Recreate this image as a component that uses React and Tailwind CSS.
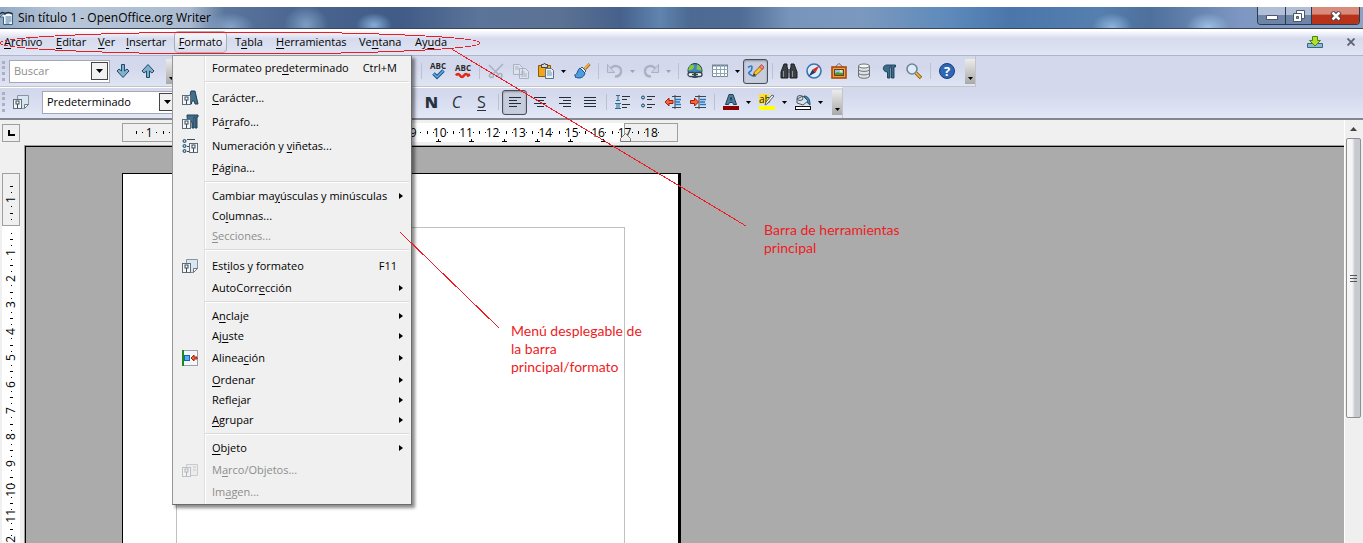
/* eslint-disable react/prop-types */
import { useState } from "react";

const menus = [
  { label: "Archivo", key: 0, width: "w-[52px]" },
  { label: "Editar", key: 0, width: "w-[42px]" },
  { label: "Ver", key: 0, width: "w-[28px]" },
  { label: "Insertar", key: 0, width: "w-[52px]" },
  { label: "Formato", key: 0, width: "mr-1 w-[53px]", open: true },
  { label: "Tabla", key: 1, width: "w-[41px]" },
  { label: "Herramientas", key: 0, width: "w-[83px]" },
  { label: "Ventana", key: 2, width: "w-[56px]" },
  { label: "Ayuda", key: 2, width: "w-[48px]" },
];

const formatMenu = [
  [{ label: "Formateo predeterminado", key: 12, shortcut: "Ctrl+M" }],
  [
    { label: "Carácter...", key: 0, icon: "character" },
    { label: "Párrafo...", key: 2, icon: "paragraph" },
    { label: "Numeración y viñetas...", key: 13, icon: "bullets" },
    { label: "Página...", key: 0 },
  ],
  [
    { label: "Cambiar mayúsculas y minúsculas", key: 10, sub: true },
    { label: "Columnas...", key: 2 },
    { label: "Secciones...", key: 0, disabled: true },
  ],
  [
    { label: "Estilos y formateo", key: 3, icon: "styles", shortcut: "F11" },
    { label: "AutoCorrección", key: 8, sub: true },
  ],
  [
    { label: "Anclaje", key: 1, sub: true },
    { label: "Ajuste", key: 2, sub: true },
    { label: "Alineación", key: 6, icon: "alignment", sub: true },
    { label: "Ordenar", key: 0, sub: true },
    { label: "Reflejar", key: 5, sub: true },
    { label: "Agrupar", key: 0, sub: true },
  ],
  [
    { label: "Objeto", key: 0, sub: true },
    { label: "Marco/Objetos...", key: 1, icon: "frame", disabled: true },
    { label: "Imagen...", key: 2, disabled: true },
  ],
];

const tag = (x, y) => (
  <g>
    <rect x={x + 0.5} y={y + 0.5} width="8" height="9" fill="#f4f6f8" stroke="#5f6c79" />
    <rect x={x + 3} y={y + 2} width="3" height="3" fill="#fff" stroke="#3b4a58" />
    <path d={`M${x + 4.5} ${y + 5}v4`} stroke="#3b4a58" />
  </g>
);

const lines = (color, rows) =>
  rows.map(([x, y, w]) => <rect key={y} x={x} y={y} width={w} height="1" fill={color} />);

const bullets = (
  <g fill="#9fd0e8" stroke="#1d4560">
    <circle cx="2.5" cy="3" r="1.5" />
    <circle cx="2.5" cy="8" r="1.5" />
    <circle cx="2.5" cy="13" r="1.5" />
  </g>
);

const icons = {
  character: (
    <>
      <path d="M6 14 9 1h4l3 13h-3l-.7-3H10l-.6 3z" fill="#41708f" stroke="#1f3f57" strokeWidth="1" />
      {tag(0, 5)}
    </>
  ),
  paragraph: (
    <>
      <path d="M5 1h11v2h-1v11h-2V3h-1v11h-2V8C6 8 5 6 5 1z" fill="#41708f" stroke="#1f3f57" strokeWidth="1" />
      {tag(0, 5)}
    </>
  ),
  bullets: (
    <>
      {bullets}
      <path d="M5 1.500h8M5 8.500h2M5 13.500h2" stroke="#3b4a58" />
      {tag(7, 5)}
    </>
  ),
  styles: (
    <>
      <path d="M4.500 1.500h11v9l-4 4h-7z" fill="#d9e6ef" stroke="#8894a0" />
      <path d="M15.500 10.500h-4v4z" fill="#fff" stroke="#6d7a86" />
      {tag(0, 5)}
    </>
  ),
  frame: (
    <g opacity=".35">
      <path d="M4.500 2.500h11v11h-11z" fill="#e5e5e5" stroke="#888" />
      <path d="M11 5h3M11 8h3" stroke="#888" />
      {tag(0, 5)}
    </g>
  ),
  alignment: (
    <>
      <rect x=".5" y=".5" width="15" height="15" fill="#f4f6f9" stroke="#9aa3ad" />
      <path d="M1 0v16" stroke="#1e8a1e" strokeWidth="2" />
      <rect x="2.500" y="5.500" width="5" height="5" fill="#52b0f2" stroke="#1667a8" />
      <path d="M9 8l3-3v2h3v2h-3v2z" fill="#f2683c" stroke="#a51f0c" />
    </>
  ),
  down: <path d="M6.500 1.500h3V8l2.500-2 2 2-6 6.500L2 8l2-2 2.500 2z" fill="#7fb0cc" stroke="#1f4a6b" />,
  up: <path d="M6.500 14.500h3V8l2.500 2 2-2-6-6.500L2 8l2 2 2.500-2z" fill="#7fb0cc" stroke="#1f4a6b" />,
  spell: (
    <>
      <text x="8" y="6" textAnchor="middle" fontSize="8" fontWeight="700" fill="#2b2b2b">ABC</text>
      <path d="M3.500 10.500 7 14 13.500 7.500" fill="none" stroke="#174f87" strokeWidth="3.500" />
      <path d="M3.500 10.500 7 14 13.500 7.500" fill="none" stroke="#63b1ee" strokeWidth="1.500" />
    </>
  ),
  autospell: (
    <>
      <text x="8" y="8" textAnchor="middle" fontSize="8" fontWeight="700" fill="#2b2b2b">ABC</text>
      <path d="M1 12.500q2-3 4 0t4 0t4 0l2-1" fill="none" stroke="#e02a16" strokeWidth="2.600" />
    </>
  ),
  cut: (
    <g fill="none" stroke="#aab1c2" strokeWidth="1.600">
      <path d="M1 2l9 9M15 1 5 11" />
      <circle cx="3.500" cy="12.500" r="2" />
      <circle cx="12" cy="12.500" r="2" />
    </g>
  ),
  copy: (
    <g fill="#dfe3ee" stroke="#aab1c2">
      <path d="M.5 1.500h6l3 3v7h-9zM6.500 5.500h6l3 3v7h-9z" />
      <path d="M2 4h4M2 6h4M8 9h4M8 11h6M8 13h6" />
    </g>
  ),
  paste: (
    <>
      <path d="M.5 2.500h12v11H.5z" fill="#f0a51c" stroke="#8d5a08" />
      <path d="M3.500 4.500v-3h2L6.500 0l1 1.500h2v3z" fill="#d8d8d8" stroke="#444" />
      <path d="M7.500 5.500h6l2 2v8h-8z" fill="#e9f1f7" stroke="#5b7185" />
      <path d="M9 8h4M9 10h5M9 12h5" stroke="#6d97b8" />
    </>
  ),
  brush: (
    <>
      <path d="M15.500 1 11 6" stroke="#b46b0f" strokeWidth="3" />
      <path d="M15 1 11 5.500" stroke="#f7b84b" strokeWidth="1.500" />
      <path d="M8 4l4 4-1.500 1.500-4-4z" fill="#e8eef4" stroke="#3b5a78" />
      <path d="M6 5l5 5c-1 5-6 6-10 4 1-1 0-1.500-.5-2 3 0 3-5.500 5.500-7z" fill="#4f9be0" stroke="#174f87" />
    </>
  ),
  undo: (
    <>
      <path d="M3 7C5 1 15 2 14 9c-.5 3-3 4.500-6 4.500" fill="none" stroke="#aab1c2" strokeWidth="2.400" />
      <path d="M.5 1.500v8h7z" fill="#cdd2de" stroke="#aab1c2" />
    </>
  ),
  redo: (
    <>
      <path d="M13 7C11 1 1 2 2 9c.5 3 3 4.500 6 4.500" fill="none" stroke="#aab1c2" strokeWidth="2.400" />
      <path d="M15.500 1.500v8h-7z" fill="#cdd2de" stroke="#aab1c2" />
    </>
  ),
  link: (
    <>
      <circle cx="8" cy="7.500" r="7" fill="#3f86c4" stroke="#16405f" />
      <path d="M3 2.500c3-2 5 0 4 2s-3 3-5.500 3C1 6 2 3.500 3 2.500zM10 1.500c3 1 5 4 4.500 6l-5-1z" fill="#8cc63a" />
      <rect x="1" y="9.500" width="7" height="4" rx="2" fill="#fff" stroke="#35434c" strokeWidth="1.300" />
      <rect x="8" y="9.500" width="7" height="4" rx="2" fill="#fff" stroke="#35434c" strokeWidth="1.300" />
      <path d="M5 11.500h6" stroke="#35434c" strokeWidth="1.300" />
    </>
  ),
  table: (
    <>
      <path d="M.5 2.500h15v11H.5z" fill="#fff" stroke="#6f8796" />
      <path d="M0 2.500h16" stroke="#6f8796" strokeWidth="2" />
      <path d="M0 6.500h16M0 10.500h16M4.500 2v12M8.500 2v12M12.500 2v12" stroke="#8fa6b5" />
    </>
  ),
  draw: (
    <>
      <path d="M0 4.500q4-3 4 0t-2.500 4.500 3.500 4h3" fill="none" stroke="#2b78d4" strokeWidth="1.600" />
      <path d="M5 13l1.500-4L13 2.500 15.500 5 9 11.500z" fill="#f7c62e" stroke="#9a6508" />
      <path d="M11.500 4 13.500 1.500 16 4 14 6.500z" fill="#f08b8b" stroke="#b03838" strokeWidth=".8" />
      <path d="M5 13l1-2.500L7.500 12z" fill="#222" />
    </>
  ),
  find: (
    <>
      <path d="M3 1h3v3l1 3v8H0V9zM13 1h-3v3L9 7v8h7V9z" fill="#3b4046" stroke="#1c1f22" />
      <path d="M7 6h2v4H7z" fill="#5d646b" />
      <path d="M2.500 8v6M11.500 8v6" stroke="#8b939b" />
    </>
  ),
  navigator: (
    <>
      <circle cx="8" cy="8" r="7" fill="#dcebf8" stroke="#3a74b0" strokeWidth="1.600" />
      <path d="M13.500 2.500 9.500 9.500 6.500 6.500z" fill="#e32814" />
      <path d="M2.500 13.500l4-7 3 3z" fill="#1b3c78" />
    </>
  ),
  gallery: (
    <>
      <path d="M4 4l4-3.500L12 4" fill="none" stroke="#8a6a4a" />
      <rect x="1" y="4" width="14" height="11" fill="#f0a048" stroke="#a8480c" strokeWidth="1.600" />
      <rect x="3.500" y="6.500" width="9" height="6" fill="#8cc8f0" stroke="#7a3b0e" />
      <path d="M4 12v-2l3-1 2 1h3v2z" fill="#4c9a2a" />
      <circle cx="10" cy="8" r="1" fill="#fff29a" />
    </>
  ),
  source: (
    <>
      <path d="M2.500 3v10c0 3 11 3 11 0V3" fill="#dfe2e5" stroke="#6c7378" />
      <ellipse cx="8" cy="3" rx="5.500" ry="2" fill="#f8f8f8" stroke="#6c7378" />
      <path d="M2.500 6.500c0 2.500 11 2.500 11 0M2.500 10c0 2.500 11 2.500 11 0" fill="none" stroke="#6c7378" />
    </>
  ),
  pilcrow: <path d="M6 2h8.500v2H13v11h-2.500V4H9v11H6.500V9C1 9 1 2 6 2z" fill="#3c6c8c" stroke="#173c55" strokeWidth=".9" />,
  zoom: (
    <>
      <path d="M10 10l5 5" stroke="#8d5a08" strokeWidth="3.400" />
      <path d="M10 10l4.500 4.500" stroke="#f5bf50" strokeWidth="1.600" />
      <circle cx="6" cy="6" r="5" fill="#dcecf8" stroke="#718596" strokeWidth="1.600" />
    </>
  ),
  help: (
    <>
      <circle cx="8" cy="8" r="7.500" fill="#2f66b4" stroke="#173f7c" />
      <text x="8" y="12.500" textAnchor="middle" fontSize="13" fontWeight="700" fill="#fff">?</text>
    </>
  ),
  alignLeft: <>{lines("#1f2d38", [[2, 3, 12], [2, 6, 8], [2, 9, 12], [2, 12, 8]])}</>,
  alignCenter: <>{lines("#1f2d38", [[2, 3, 12], [4, 6, 8], [2, 9, 12], [5, 12, 7]])}</>,
  alignRight: <>{lines("#1f2d38", [[2, 3, 12], [6, 6, 8], [2, 9, 12], [6, 12, 8]])}</>,
  justify: <>{lines("#1f2d38", [[2, 3, 12], [2, 6, 12], [2, 9, 12], [2, 12, 12]])}</>,
  numbered: (
    <>
      <path d="M1 1.500h4M3 2v4M1 6.500h4M0 9.500h6M2 10v4M4 10v4M0 14.500h6" stroke="#2b6f92" />
      <path d="M7 2.500h8M7 5.500h5M7 10.500h8M7 13.500h5" stroke="#2b333a" />
    </>
  ),
  bulleted: (
    <>
      <g fill="#9fd0e8" stroke="#1d4560">
        <circle cx="3" cy="3.500" r="1.500" />
        <circle cx="3" cy="11.500" r="1.500" />
      </g>
      <path d="M7 2.500h8M7 5.500h5M7 10.500h8M7 13.500h5" stroke="#2b333a" />
    </>
  ),
  outdent: (
    <>
      <path d="M7 2.500h9M7 13.500h9M10 1v14" stroke="#3b4650" />
      <path d="M10 5.500h6M10 8h5M10 10.500h6" stroke="#1f7ac4" strokeWidth="1.500" />
      <path d="M0 8l4-4v2.500h4v3H4V12z" fill="#f2683c" stroke="#a51f0c" />
    </>
  ),
  indent: (
    <>
      <path d="M5 2.500h11M5 13.500h11M9 1v14" stroke="#3b4650" />
      <path d="M10 5.500h6M10 8h5M10 10.500h6" stroke="#1f7ac4" strokeWidth="1.500" />
      <path d="M8.500 8l-4-4v2.500h-4v3h4V12z" fill="#f2683c" stroke="#a51f0c" />
    </>
  ),
  fontColor: (
    <>
      <path d="M2.500 10.500 6 .5h4l3.500 10h-3l-.8-2H6.400l-.8 2zM7 6h2l-1-3z" fill="#4d7f9e" stroke="#1f3f57" />
      <rect y="12" width="16" height="4" fill="#8b0000" />
    </>
  ),
  highlight: (
    <>
      <rect width="10" height="10" fill="#ffe12b" />
      <text x="0" y="9" fontSize="10" fill="#222">ab</text>
      <path d="M15 2 8 10l-2 1 1-3 6-7z" fill="#f1f3f5" stroke="#59636c" />
      <rect y="12" width="16" height="4" fill="#ffff00" />
    </>
  ),
  fill: (
    <>
      <path d="M9 2c4 0 6 3 6 9-2-1-3-3-3-5z" fill="#3d8fc4" stroke="#1d4b6b" />
      <path d="M2 5l6-3 5 5-5 4-6-2z" fill="#d6dfe5" stroke="#4a5a66" />
      <ellipse cx="5" cy="4" rx="3" ry="2.500" fill="none" stroke="#4a5a66" />
      <rect x=".5" y="12.500" width="15" height="3" fill="#fff" stroke="#111" />
    </>
  ),
};

const Icon = ({ name }) => (
  <svg viewBox="0 0 16 16" className="size-4 shrink-0 overflow-visible" aria-hidden="true">
    {icons[name]}
  </svg>
);

const Mnemonic = ({ label, at }) => (
  <span>
    {label.slice(0, at)}
    <span className="underline underline-offset-2">{label[at]}</span>
    {label.slice(at + 1)}
  </span>
);

const Tool = ({ name, label, active, children }) => (
  <button
    type="button"
    aria-label={label || name}
    className={
      active
        ? "flex h-[25px] w-[25px] shrink-0 items-center justify-center rounded-[3px] border border-[#4a4d58] bg-[#c8cddd] shadow-[inset_0_1px_2px_#8b8f9c]"
        : "flex h-[25px] w-[25px] shrink-0 items-center justify-center"
    }
  >
    {children || <Icon name={name} />}
  </button>
);

const Caret = ({ dim }) => (
  <button type="button" aria-label="Más opciones" className="flex h-[25px] w-[11px] shrink-0 items-center justify-center">
    <svg viewBox="0 0 5 3" className={dim ? "h-[3px] w-[5px] text-[#9da3b3]" : "h-[3px] w-[5px] text-black"}>
      <path d="M0 0h5L2.500 3z" fill="currentColor" />
    </svg>
  </button>
);

const Sep = () => (
  <div className="flex w-2 shrink-0 justify-center">
    <div className="h-4 w-px bg-[#bcc1d0]" />
  </div>
);

const Overflow = () => (
  <button
    type="button"
    aria-label="Opciones de la barra"
    className="flex h-[25px] w-[10px] shrink-0 items-end justify-center bg-linear-to-b from-[#ececec] to-[#a9a9a9] pb-1"
  >
    <svg viewBox="0 0 5 3" className="h-[3px] w-[5px]">
      <path d="M0 0h5L2.500 3z" />
    </svg>
  </button>
);

const Handle = () => <div className="mx-0.5 h-5 w-[3px] shrink-0 border-l-[3px] border-dotted border-[#aab0c2]" />;

const DropButton = ({ label }) => (
  <button type="button" aria-label={label} className="flex h-[18px] w-[17px] shrink-0 items-center justify-center border border-[#444] bg-[#f1f1f1]">
    <svg viewBox="0 0 7 4" className="h-1 w-[7px]">
      <path d="M0 0h7L3.500 4z" />
    </svg>
  </button>
);

const FormatMenu = () => (
  <div
    role="menu"
    className="absolute top-full -left-0.5 z-20 w-[240px] border border-[#979797] border-r-[#6b6b6b] border-b-[#6b6b6b] bg-[#f0f0f0] bg-[linear-gradient(to_right,transparent_31px,#dfdfdf_31px,#dfdfdf_32px,#fff_32px,#fff_33px,transparent_33px)] py-0.5 shadow-[3px_3px_3px_rgba(0,0,0,0.45)]"
  >
    {formatMenu.map((group, i) => (
      <div key={i}>
        {i > 0 && (
          <div className="flex h-2 items-center pr-0.5 pl-8">
            <div className="h-0.5 flex-1 border-t border-[#dadada] bg-white" />
          </div>
        )}
        {group.map((item) => (
          <button
            key={item.label}
            type="button"
            role="menuitem"
            disabled={item.disabled}
            className={`flex w-full items-center pr-2 text-left whitespace-nowrap ${item.icon ? "h-6" : "h-5"} ${
              item.disabled ? "text-[#8d8d8d]" : "text-black"
            }`}
          >
            <span className="flex w-[39px] shrink-0 pl-[9px]">{item.icon && <Icon name={item.icon} />}</span>
            <span className="flex-1">
              <Mnemonic label={item.label} at={item.key} />
            </span>
            {item.shortcut && <span className="pr-1.5">{item.shortcut}</span>}
            {item.sub && (
              <svg viewBox="0 0 4 6" className="h-1.5 w-1 shrink-0">
                <path d="M0 0v6l4-3z" />
              </svg>
            )}
          </button>
        ))}
      </div>
    ))}
  </div>
);

const TitleBar = () => (
  <div className="flex h-[22px] items-start justify-between border-b border-[#3c4658] bg-[radial-gradient(ellipse_24px_14px_at_230px_20px,#86a4c8,transparent),radial-gradient(ellipse_22px_20px_at_306px_18px,#7d9ec2,transparent),radial-gradient(ellipse_18px_12px_at_374px_18px,#86aed8,transparent),radial-gradient(ellipse_20px_14px_at_1112px_20px,#8fb4dc,transparent),radial-gradient(ellipse_22px_14px_at_1208px_20px,#9cc0e4,transparent),linear-gradient(to_right,#93a9c4_0px,#b9c7d9_60px,#a9bad0_190px,#5a769d_225px,#4a6690_300px,#3f5b86_400px,#5b7499_480px,#5c7294_560px,#46618b_620px,#5f84ae_660px,#4c6a92_690px,#4e6c94_740px,#7795ba_790px,#7b99be_860px,#5d8abb_950px,#4a76aa_1010px,#557fae_1100px,#4e709c_1150px,#7d97c2_1240px,#8ba2c6)] text-xs">
    <div className="flex h-[21px] items-center gap-1">
      <svg viewBox="0 0 14 14" className="size-[14px]" aria-hidden="true">
        <path d="M1.500 4.500 5 2h7.500v11.500h-9V6H0z" fill="#f5f8fb" stroke="#35607f" />
        <path d="M0 3q3-3 5 0 3-3 7 0" fill="none" stroke="#1f3345" strokeWidth="1.600" />
        <path d="M5.500 6h6M5.500 8h6M5.500 10h6M5.500 12h4" stroke="#48799b" />
      </svg>
      <span>Sin título 1 - OpenOffice.org Writer</span>
    </div>
    <div className="mr-[3px] flex h-[18px] overflow-hidden rounded-b border border-t-0 border-[#2c3a50]">
      <button type="button" aria-label="Minimizar" className="flex w-7 items-center justify-center border-r border-[#2c3a50] bg-linear-to-b from-[#b0bfd6] from-45% to-[#6e85a8] to-50%">
        <svg viewBox="0 0 12 5" className="mt-1 h-[5px] w-3">
          <path d="M.5.500h11v4H.5z" fill="#fff" stroke="#4b566b" />
        </svg>
      </button>
      <button type="button" aria-label="Restaurar" className="flex w-[26px] items-center justify-center border-r border-[#2c3a50] bg-linear-to-b from-[#b0bfd6] from-45% to-[#6e85a8] to-50%">
        <svg viewBox="0 0 12 12" className="size-3">
          <path d="M3.500.500h8v8h-8z" fill="#fff" stroke="#4b566b" />
          <path d="M.5 3.500h8v8h-8z" fill="#fff" stroke="#4b566b" />
          <path d="M3.500 6.500h2v2h-2z" fill="#8ba2c6" stroke="#4b566b" />
        </svg>
      </button>
      <button type="button" aria-label="Cerrar" className="flex w-[47px] items-center justify-center bg-linear-to-b from-[#d98b7c] from-40% to-[#b8331a] to-50%">
        <svg viewBox="0 0 12 10" className="h-[10px] w-3">
          <path d="M2 1 10 9M10 1 2 9" stroke="#4b3a44" strokeWidth="4.500" />
          <path d="M2.500 1.500 9.500 8.500M9.500 1.500 2.500 8.500" stroke="#fff" strokeWidth="2.500" />
        </svg>
      </button>
    </div>
  </div>
);

const MenuBar = () => (
  <nav className="flex h-[27px] items-center border-b border-[#b0b5c9] bg-linear-to-b from-white from-5% via-[#d5daed] via-38% to-[#e1e6f5] pr-2">
    {menus.map((menu) => (
      <div key={menu.label} className={`relative flex h-full shrink-0 items-center ${menu.width}`}>
        <button
          type="button"
          aria-expanded={!!menu.open}
          className={
            menu.open
              ? "h-[22px] w-full rounded-sm border border-[#a9adb9] bg-linear-to-b from-[#f6f7fb] to-[#d6daea]"
              : "h-[22px] w-full pl-1 text-left"
          }
        >
          <Mnemonic label={menu.label} at={menu.key} />
        </button>
        {menu.open && <FormatMenu />}
      </div>
    ))}
    <div className="ml-auto flex items-center gap-6">
      <button type="button" aria-label="Actualizar">
        <svg viewBox="0 0 16 13" className="h-[13px] w-4">
          <path d="M.5 7.500h15v4H.5z" fill="#8fb9d2" stroke="#3b6580" />
          <path d="M5.500.500h5v4h3L8 10 2.500 4.500h3z" fill="#b8dc28" stroke="#3c8a10" />
        </svg>
      </button>
      <button type="button" aria-label="Cerrar documento">
        <svg viewBox="0 0 8 8" className="size-2">
          <path d="M.5.500l7 7M7.500.500l-7 7" stroke="#5b6270" strokeWidth="1.800" />
        </svg>
      </button>
    </div>
  </nav>
);

const Toolbars = () => {
  const [search, setSearch] = useState("");
  const [style, setStyle] = useState("Predeterminado");

  return (
    <div className="border-b-2 border-[#85878f] bg-linear-to-b from-[#d3d8ec] from-60% to-[#e2e8f7]">
      <div className="flex h-[31px] w-fit items-center border-r border-b border-[#c5c3c4] bg-linear-to-b from-[#d3d8ec] from-40% to-[#e0e5f4]">
        <div className="flex w-[417px] shrink-0 items-center">
          <Handle />
          <div className="ml-0.5 flex h-[23px] w-[101px] items-center border border-[#a4a8b4] bg-white pr-px">
            <input
              aria-label="Buscar"
              placeholder="Buscar"
              value={search}
              onChange={(e) => setSearch(e.target.value)}
              className="w-0 flex-1 pl-1 outline-none placeholder:text-[#8e8e8e]"
            />
            <DropButton label="Búsquedas recientes" />
          </div>
          <Tool name="down" label="Buscar siguiente" />
          <Tool name="up" label="Buscar anterior" />
          <div className="ml-1.5">
            <Overflow />
          </div>
        </div>
        <Sep />
        <Tool name="spell" />
        <Tool name="autospell" />
        <Sep />
        <Tool name="cut" />
        <Tool name="copy" />
        <Tool name="paste" />
        <Caret />
        <Tool name="brush" />
        <Sep />
        <Tool name="undo" />
        <Caret dim />
        <Tool name="redo" />
        <Caret dim />
        <Sep />
        <Tool name="link" />
        <Tool name="table" />
        <Caret />
        <Tool name="draw" active />
        <Sep />
        <Tool name="find" />
        <Tool name="navigator" />
        <Tool name="gallery" />
        <Tool name="source" />
        <Tool name="pilcrow" />
        <Tool name="zoom" />
        <Sep />
        <Tool name="help" />
        <div className="ml-1.5">
          <Overflow />
        </div>
      </div>
      <div className="flex h-[31px] w-fit items-center border-t border-r border-t-white border-r-[#c5c3c4] pb-0.5">
        <div className="flex w-[419px] shrink-0 items-center">
          <Handle />
          <div className="ml-px">
            <Tool name="styles" label="Estilos y formateo" />
          </div>
          <div className="ml-[9px] flex h-[23px] w-[136px] items-center border border-[#a4a8b4] bg-white pr-px">
            <select
              aria-label="Estilo de párrafo"
              value={style}
              onChange={(e) => setStyle(e.target.value)}
              className="w-0 flex-1 appearance-none pl-1 outline-none"
            >
              <option>Predeterminado</option>
              <option>Encabezado</option>
            </select>
            <DropButton label="Estilos" />
          </div>
        </div>
        <Tool label="Negrita">
          <span className="text-base font-extrabold text-[#27343f]">N</span>
        </Tool>
        <Tool label="Cursiva">
          <span className="text-base font-medium text-[#27343f] italic">C</span>
        </Tool>
        <Tool label="Subrayado">
          <span className="border-b border-[#27343f] text-base leading-4 font-medium text-[#27343f]">S</span>
        </Tool>
        <Sep />
        <Tool name="alignLeft" active />
        <Tool name="alignCenter" />
        <Tool name="alignRight" />
        <Tool name="justify" />
        <Sep />
        <Tool name="numbered" />
        <Tool name="bulleted" />
        <Tool name="outdent" />
        <Tool name="indent" />
        <Sep />
        <Tool name="fontColor" />
        <Caret />
        <Tool name="highlight" />
        <Caret />
        <Tool name="fill" />
        <Caret />
        <div className="ml-1.5">
          <Overflow />
        </div>
      </div>
    </div>
  );
};

// centimetre marks, with the zero of the page left blank
const across = [1, "", 1, 2, 3, 4, 5, 6, 7, 8, 9, 10, 11, 12, 13, 14, 15, 16, 17, 18];
const downwards = [1, "", 1, 2, 3, 4, 5, 6, 7, 8, 9, 10, 11, 12, 13];

const Ruler = () => (
  <div className="grid h-[19px] w-[556px] text-xs leading-[19px] [&>*]:col-start-1 [&>*]:row-start-1">
    <div className="flex">
      <div className="w-[54px] border border-[#9f9f9f] bg-[#f0f0f0]" />
      <div className="flex-1 bg-white" />
      <div className="w-[54px] border border-[#9f9f9f] bg-[#f0f0f0]" />
    </div>
    <div className="flex px-[14px]">
      {across.map((n, i) => (
        <div key={i} className="grid flex-1 justify-items-center [&>*]:col-start-1 [&>*]:row-start-1">
          <svg viewBox="0 0 26 19" className="h-[19px] w-[26px]" shapeRendering="crispEdges">
            <path d="M0 8h1v3H0zM6 9h1v1H6zM20 9h1v1h-1z" />
          </svg>
          <span className="flex w-0 justify-center">{n}</span>
        </div>
      ))}
    </div>
    <div className="flex items-end pl-[55px]">
      {across.slice(0, 13).map((n, i) => (
        <svg key={i} viewBox="0 0 33 3" className="h-[3px] w-[33px] shrink-0" shapeRendering="crispEdges">
          <path d="M28 2h5v1h-5zM30 0h1v2h-1z" />
        </svg>
      ))}
    </div>
    <div className="flex items-end justify-end pr-[47px]">
      <svg viewBox="0 0 11 9" className="h-[9px] w-[11px]">
        <path d="M.5 8.500v-3l5-5 5 5v3z" fill="#f0f0f0" stroke="#777" />
      </svg>
    </div>
  </div>
);

const SideRuler = () => (
  <div className="ml-0.5 grid h-[436px] w-[18px] shrink-0 text-xs leading-[18px] [&>*]:col-start-1 [&>*]:row-start-1">
    <div className="flex flex-col">
      <div className="h-[53px] border border-[#9f9f9f] bg-[#f0f0f0]" />
      <div className="flex-1 bg-white" />
    </div>
    <div className="flex h-[409px] flex-col pt-[13px]">
      {downwards.map((n, i) => (
        <div key={i} className="grid min-h-0 flex-1 items-center justify-items-center [&>*]:col-start-1 [&>*]:row-start-1">
          <svg viewBox="0 0 18 26" className="h-[26px] w-[18px]" shapeRendering="crispEdges">
            <path d="M8 0h3v1H8zM9 6h1v1H9zM9 20h1v1H9z" />
          </svg>
          <span className="rotate-180 [writing-mode:vertical-rl]">{n}</span>
        </div>
      ))}
    </div>
  </div>
);

const ScrollBar = () => (
  <div className="flex w-[19px] shrink-0 flex-col items-center border-l border-white bg-[#efefef] pr-0.5">
    <button type="button" aria-label="Subir" className="flex h-[18px] w-full items-center justify-center">
      <svg viewBox="0 0 7 4" className="h-1 w-[7px]">
        <path d="M0 4h7L3.500 0z" fill="#444" />
      </svg>
    </button>
    <div className="flex h-[280px] w-[15px] flex-col items-center justify-center gap-0.5 rounded-xs border border-[#8e8f93] bg-linear-to-r from-[#f5f5f6] from-40% to-[#c9cad0] to-60%">
      <div className="h-px w-[7px] bg-[#555]" />
      <div className="h-px w-[7px] bg-[#555]" />
      <div className="h-px w-[7px] bg-[#555]" />
    </div>
  </div>
);

const Notes = () => (
  <>
    <svg className="pointer-events-none absolute inset-0 z-30 h-full w-full" fill="none" stroke="#ed1c24" shapeRendering="crispEdges">
      <ellipse cx="240" cy="43" rx="240" ry="11" />
      <path d="M450 48 746 226M400 232l99 96" />
    </svg>
    <p className="absolute top-[221px] left-[764px] z-30 w-[150px] font-['Lato'] text-sm leading-[18px] text-[#ed1c24]">
      Barra de herramientas principal
    </p>
    <p className="absolute top-[322px] left-[511px] z-30 w-[150px] font-['Lato'] text-sm leading-[18px] text-[#ed1c24]">
      Menú desplegable de<br />la barra<br />principal/formato
    </p>
  </>
);

const App = () => (
  <div className="relative flex h-screen flex-col overflow-hidden bg-white pt-[7px] font-['Open_Sans','Noto_Sans',sans-serif] text-[11px] text-black">
    <TitleBar />
    <MenuBar />
    <Toolbars />
    <div className="flex min-h-0 flex-1 bg-[#f0f0f0]">
      <div className="flex min-w-0 flex-1 flex-col">
        <div className="flex h-[25px] shrink-0 items-center pl-0.5">
          <button type="button" aria-label="Tabulador" className="mr-[102px] flex size-[18px] items-center justify-center border border-[#9f9f9f]">
            <svg viewBox="0 0 7 6" className="h-1.5 w-[7px]">
              <path d="M0 0h2v4h5v2H0z" />
            </svg>
          </button>
          <Ruler />
        </div>
        <div className="flex min-h-0 flex-1">
          <div className="w-6 shrink-0 overflow-hidden pt-7">
            <SideRuler />
          </div>
          <div className="flex min-w-0 flex-1 border-t border-l border-[#9f9f9f]">
            <main className="flex min-w-0 flex-1 overflow-hidden border-t border-l border-black bg-[#ababab] pt-[26px] pl-24">
              <div className="h-[800px] w-[559px] shrink-0 border border-r-3 border-black bg-white px-[53px] pt-[53px]">
                <div className="h-full border border-[#c0c0c0]" />
              </div>
            </main>
          </div>
        </div>
      </div>
      <ScrollBar />
    </div>
    <Notes />
  </div>
);

export default App;
